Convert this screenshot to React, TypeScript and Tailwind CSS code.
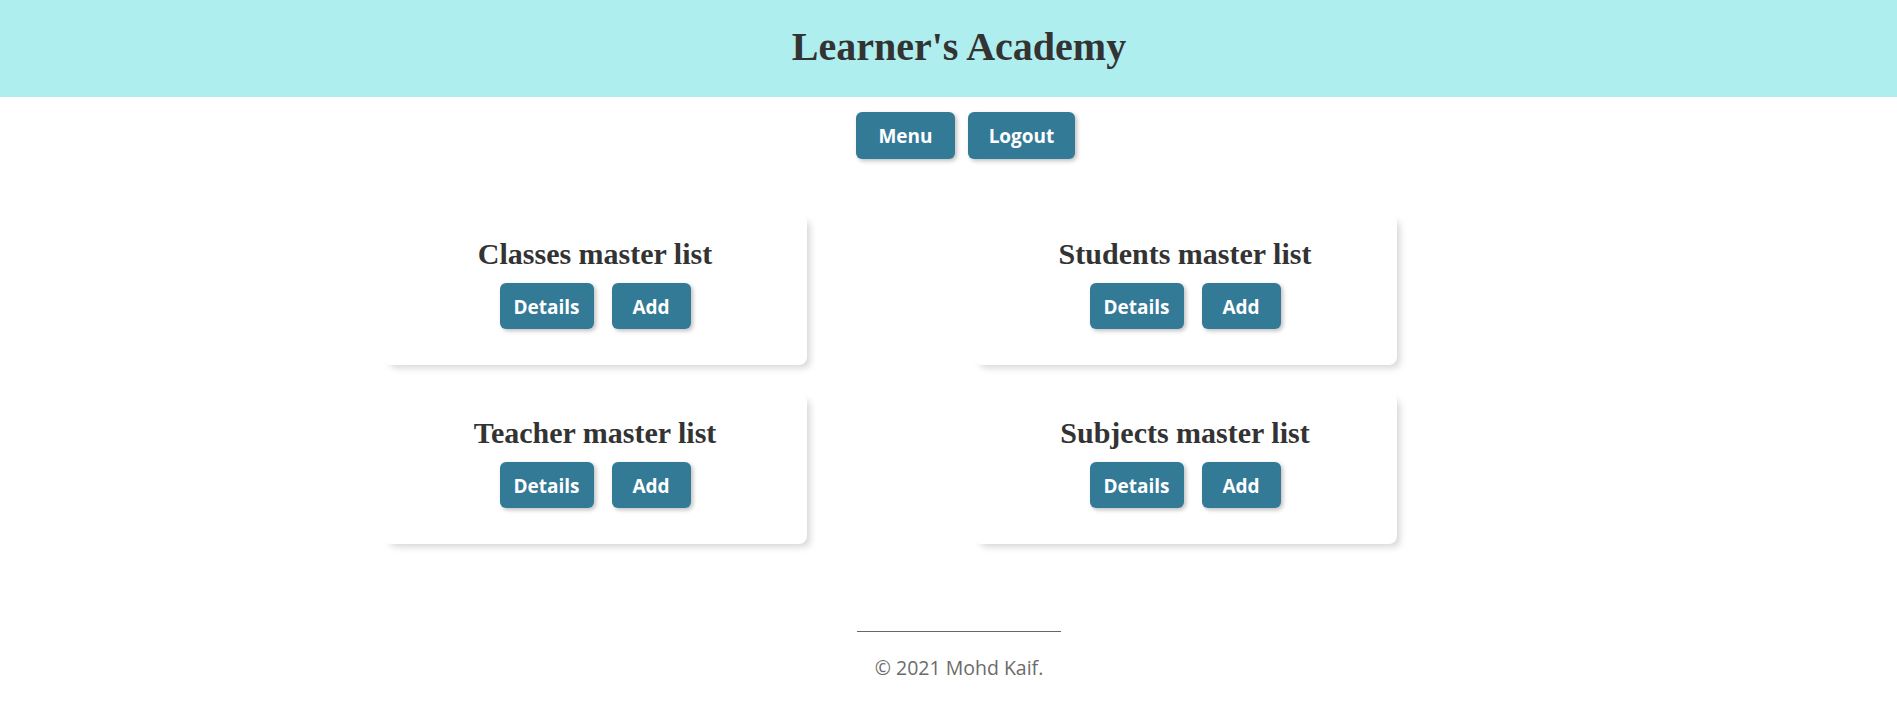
import React from 'react';

type Section = { title: string };

const sections: Section[] = [
  { title: 'Classes master list' },
  { title: 'Students master list' },
  { title: 'Teacher master list' },
  { title: 'Subjects master list' },
];

const sans = "font-['Open_Sans','Noto_Sans',sans-serif]";
const serif = "font-['Liberation_Serif','Times_New_Roman',serif]";

const ActionButton = ({ label, width }: { label: string; width: string }) => (
  <button
    className={`${sans} ${width} h-[46px] pt-[2px] rounded-[6px] bg-[#337a96] text-[19px] font-bold text-white shadow-[2px_2px_4px_rgba(0,0,0,0.25)] flex items-center justify-center`}
  >
    {label}
  </button>
);

const App = () => {
  return (
    <div className="min-h-screen bg-white text-[#333]">
      <header className="h-[97px] bg-[#afeeee] flex items-center justify-center pl-[21px] pb-[4px]">
        <h1 className={`${serif} text-[40px] font-bold leading-[48px] text-[#333]`}>Learner's Academy</h1>
      </header>

      <nav className="mt-[15px] flex justify-center gap-[13px] pl-[34px]">
        <button
          className={`${sans} w-[99px] h-[47px] pt-[2px] rounded-[6px] bg-[#337a96] text-[19px] font-bold text-white shadow-[2px_2px_4px_rgba(0,0,0,0.25)]`}
        >
          Menu
        </button>
        <button
          className={`${sans} w-[107px] h-[47px] pt-[2px] rounded-[6px] bg-[#337a96] text-[19px] font-bold text-white shadow-[2px_2px_4px_rgba(0,0,0,0.25)]`}
        >
          Logout
        </button>
      </nav>

      <main className="mt-[55px] ml-[383px] grid grid-cols-[424px_424px] gap-x-[166px] gap-y-[28px]">
        {sections.map((section) => (
          <div
            key={section.title}
            className="h-[151px] rounded-[8px] bg-white shadow-[5px_5px_7px_-2px_rgba(0,0,0,0.16)] flex flex-col items-center pt-[22px]"
          >
            <h2 className={`${serif} text-[30px] font-bold leading-[36px] text-[#333]`}>{section.title}</h2>
            <div className="mt-[11px] flex gap-[18px]">
              <ActionButton label="Details" width="w-[94px]" />
              <ActionButton label="Add" width="w-[79px]" />
            </div>
          </div>
        ))}
      </main>

      <footer className="mt-[87px] flex flex-col items-center pl-[21px]">
        <hr className="w-[204px] border-0 border-t border-[#666]" />
        <p className={`${sans} mt-[21px] text-[19.5px] text-[#6b6b6b]`}>© 2021 Mohd Kaif.</p>
      </footer>
    </div>
  );
};

export default App;
